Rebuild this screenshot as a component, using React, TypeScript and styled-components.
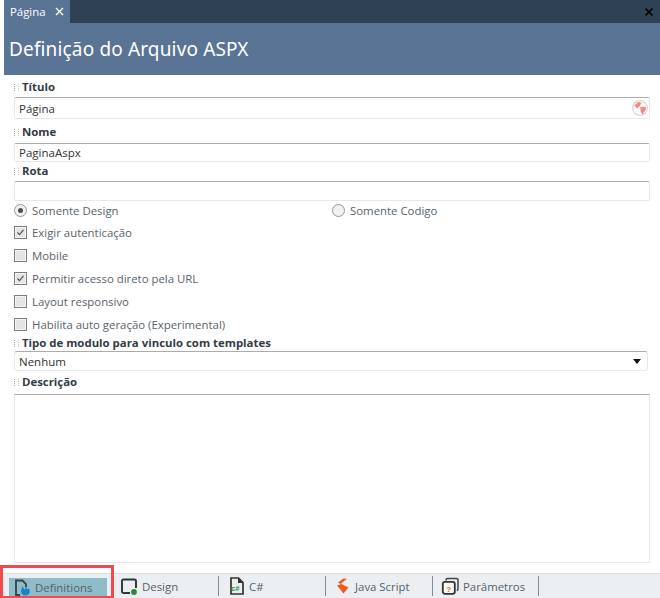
import React from "react";
import styled, { createGlobalStyle } from "styled-components";

const Global = createGlobalStyle`
  html, body { margin: 0; padding: 0; background: #fff; }
  body { font-family: "Open Sans", "Noto Sans", sans-serif; }
  #root { width: 660px; height: 598px; overflow: hidden; }
`;

const Page = styled.div`
  width: 660px;
  height: 598px;
  display: flex;
  flex-direction: column;
  background: #fff;
  overflow: hidden;
`;

const TabStrip = styled.div`
  height: 23px;
  flex: none;
  margin-left: 4px;
  display: flex;
  justify-content: space-between;
  align-items: center;
  background: #2e4155;
`;

const DocTab = styled.div`
  width: 66px;
  height: 23px;
  display: flex;
  align-items: center;
  gap: 9px;
  padding-left: 6px;
  box-sizing: border-box;
  background: #5a7495;
  color: #fff;
  font-size: 11.4px;
`;

const CloseGlyph = styled.svg`
  display: block;
  flex: none;
`;

const StripClose = styled(CloseGlyph)`
  margin-right: 7px;
`;

const Banner = styled.div`
  height: 52px;
  flex: none;
  margin-left: 4px;
  padding-left: 5px;
  display: flex;
  align-items: center;
  background: #5a7495;
  color: #fff;
  font-family: "Noto Sans", sans-serif;
  font-size: 19px;
  letter-spacing: 0.15px;
`;

const Form = styled.div`
  flex: 1;
  display: flex;
  flex-direction: column;
  padding: 0 10px 0 14px;
  min-height: 0;
`;

const Label = styled.div<{ $top: number; $height?: number }>`
  margin-top: ${(p) => p.$top}px;
  height: ${(p) => p.$height ?? 16}px;
  display: flex;
  align-items: center;
  gap: 3px;
  color: #333c46;
  font-size: 11.4px;
  font-weight: 700;
  line-height: 16px;
  white-space: nowrap;
`;

const Grip = styled.span`
  width: 5px;
  height: 7px;
  flex: none;
  border-left: 1px dotted #a8a8a8;
  border-right: 1px dotted #c8c8c8;
  box-sizing: border-box;
`;

const Input = styled.div<{ $height: number; $top: number }>`
  margin-top: ${(p) => p.$top}px;
  height: ${(p) => p.$height}px;
  flex: none;
  box-sizing: border-box;
  display: flex;
  align-items: center;
  justify-content: space-between;
  padding: 0 0 0 4px;
  border: 1px solid #e3e9ef;
  border-top-color: #acacac;
  border-radius: 2px;
  background: #fff;
  color: #333;
  font-size: 11.5px;
`;

const SelectBox = styled(Input)`
  margin-right: 2px;
  padding-right: 6px;
  border-radius: 3px;
`;

const Arrow = styled.span`
  width: 0;
  height: 0;
  border-left: 4px solid transparent;
  border-right: 4px solid transparent;
  border-top: 5px solid #111;
`;

const RadioRow = styled.div`
  height: 18px;
  flex: none;
  display: grid;
  grid-template-columns: 318px 1fr;
  align-items: center;
`;

const Option = styled.div`
  display: flex;
  align-items: center;
  gap: 5px;
  color: #59626b;
  font-size: 11.4px;
  white-space: nowrap;
`;

const CheckRow = styled(Option)<{ $top: number }>`
  margin-top: ${(p) => p.$top}px;
  height: 18px;
  flex: none;
`;

const RadioMark = styled.span<{ $on?: boolean }>`
  width: 13px;
  height: 13px;
  box-sizing: border-box;
  border: 1px solid #969696;
  border-radius: 50%;
  background: #f1f1f1;
  display: flex;
  align-items: center;
  justify-content: center;
  &::after {
    content: "";
    width: 5px;
    height: 5px;
    border-radius: 50%;
    background: ${(p) => (p.$on ? "#4d4d4d" : "transparent")};
  }
`;

const CheckMark = styled.span`
  width: 13px;
  height: 13px;
  box-sizing: border-box;
  border: 1px solid #7d7d7d;
  background: #e4e4e4;
  box-shadow: inset 0 0 0 1px #f4f4f4;
  display: flex;
  align-items: center;
  justify-content: center;
`;

const TextArea = styled.div`
  height: 169px;
  margin-top: 4px;
  flex: none;
  box-sizing: border-box;
  border: 1px solid #e3e9ef;
  border-top-color: #acacac;
  background: #fff;
`;

const BottomBar = styled.div`
  position: relative;
  height: 25px;
  flex: none;
  display: flex;
  align-items: stretch;
  background: #eceff1;
  border-top: 1px solid #dcdfe1;
  box-sizing: border-box;
  color: #56606a;
  font-size: 11.4px;
`;

const BarTab = styled.div<{ $width: number; $pad: number; $gap: number; $sep?: boolean }>`
  width: ${(p) => p.$width}px;
  box-sizing: border-box;
  display: flex;
  align-items: center;
  gap: ${(p) => p.$gap}px;
  white-space: nowrap;
  padding-left: ${(p) => p.$pad}px;
  border-right: ${(p) => (p.$sep ? "1px solid #7d8c9c" : "0")};
  margin: 2px 0 2px;
`;

const ActiveTab = styled.div`
  width: 113px;
  flex: none;
  display: flex;
  align-items: center;
  padding-left: 9px;
  box-sizing: border-box;
`;

const ActiveFill = styled.div`
  width: 98px;
  height: 19px;
  margin-top: 3px;
  padding-left: 5px;
  box-sizing: border-box;
  background: #8fbcc9;
  display: flex;
  align-items: center;
  gap: 3px;
`;

const RedFrame = styled.div`
  position: absolute;
  left: 0;
  top: -9px;
  width: 114px;
  height: 34px;
  box-sizing: border-box;
  border: 3px solid #f04a4f;
  pointer-events: none;
`;

const Icon = styled.svg`
  display: block;
  flex: none;
`;

const Close = ({ c, s = 9 }: { c: string; s?: number }) => (
  <CloseGlyph width={s} height={s} viewBox="0 0 9 9">
    <path d="M1 1l7 7M8 1L1 8" stroke={c} strokeWidth="1.4" />
  </CloseGlyph>
);

const Tick = () => (
  <svg width="9" height="9" viewBox="0 0 9 9">
    <path d="M1.5 4.5l2 2.2L7.5 1.8" fill="none" stroke="#555" strokeWidth="1.2" />
  </svg>
);

const Globe = () => (
  <Icon width="18" height="18" viewBox="0 0 18 18">
    <circle cx="9" cy="9" r="7.4" fill="#fff" stroke="#d9d4d4" strokeWidth="1.2" />
    <path d="M3.2 6.5L7.5 2.8l3 1L9 6.8 6.2 9.5z" fill="#f58a82" />
    <path d="M9 8.2l5.6-.7.4 3L11.5 15.5 10 13z" fill="#f58a82" />
  </Icon>
);

const Svg18 = ({ children }: { children: React.ReactNode }) => (
  <Icon width="18" height="18" viewBox="0 0 18 18">
    {children}
  </Icon>
);

export default function App() {
  return (
    <Page>
      <Global />
      <TabStrip>
        <DocTab>
          Página
          <Close c="#fff" />
        </DocTab>
        <StripClose width="8" height="8" viewBox="0 0 8 8">
          <path d="M.5.5l7 7M7.5.5l-7 7" stroke="#000" strokeWidth="1.5" />
        </StripClose>
      </TabStrip>
      <Banner>Definição do Arquivo ASPX</Banner>
      <Form>
        <Label $top={4}>
          <Grip />
          Título
        </Label>
        <Input $height={22} $top={2}>
          Página
          <Globe />
        </Input>
        <Label $top={5}>
          <Grip />
          Nome
        </Label>
        <Input $height={19} $top={3}>
          PaginaAspx
        </Input>
        <Label $top={1}>
          <Grip />
          Rota
        </Label>
        <Input $height={20} $top={2} />
        <RadioRow>
          <Option>
            <RadioMark $on />
            Somente Design
          </Option>
          <Option>
            <RadioMark />
            Somente Codigo
          </Option>
        </RadioRow>
        <CheckRow $top={4}>
          <CheckMark>
            <Tick />
          </CheckMark>
          Exigir autenticação
        </CheckRow>
        <CheckRow $top={5}>
          <CheckMark />
          Mobile
        </CheckRow>
        <CheckRow $top={5}>
          <CheckMark>
            <Tick />
          </CheckMark>
          Permitir acesso direto pela URL
        </CheckRow>
        <CheckRow $top={5}>
          <CheckMark />
          Layout responsivo
        </CheckRow>
        <CheckRow $top={5}>
          <CheckMark />
          Habilita auto geração (Experimental)
        </CheckRow>
        <Label $top={4} $height={12}>
          <Grip />
          Tipo de modulo para vinculo com templates
        </Label>
        <SelectBox $height={20} $top={2}>
          Nenhum
          <Arrow />
        </SelectBox>
        <Label $top={3}>
          <Grip />
          Descrição
        </Label>
        <TextArea />
      </Form>
      <BottomBar>
        <RedFrame />
        <ActiveTab>
          <ActiveFill>
            <Svg18>
              <path d="M6 16H2V1.5h6.5L12 5v3" fill="none" stroke="#3a4248" strokeWidth="1.8" />
              <path d="M8 7c1 2 2.5 2 2.5 4 1-1 1-2 1-3 2 1 1.5 2.5 2.5 2.5.5 0 .5-1 .5-1.5 1.5 2 1.5 3.5 1 5-.7 1.5-2.500 2.500-4 2.500-2.500 0-4.500-1.800-4.500-4 0-2 1.500-3.500 1-5.500z" fill="#1583d0" />
            </Svg18>
            Definitions
          </ActiveFill>
        </ActiveTab>
        <BarTab $width={106} $pad={7} $gap={4} $sep>
          <Svg18>
            <path d="M10 16H3.500A1.500 1.500 0 0 1 2 14.500V4a1.500 1.500 0 0 1 1.500-1.500h11A1.500 1.500 0 0 1 16 4v7" fill="none" stroke="#333" strokeWidth="1.9" />
            <circle cx="14" cy="15" r="2.900" fill="#27883c" />
          </Svg18>
          Design
        </BarTab>
        <BarTab $width={107} $pad={9} $gap={3} $sep>
          <Svg18>
            <path d="M3 17V1h7.500L15 5.500V17z" fill="none" stroke="#333" strokeWidth="1.700" />
            <path d="M10 1v5h5z" fill="#333" />
            <text x="3" y="14" fontSize="7.500" fontWeight="700" fill="#1f8a3c" fontFamily="Liberation Sans">c#</text>
          </Svg18>
          C#
        </BarTab>
        <BarTab $width={107} $pad={8} $gap={3} $sep>
          <Svg18>
            <path d="M9.500 1.500L13 1.800 6.500 7 4 5.500z" fill="#f05a1a" />
            <path d="M3 8.500L7.500 7l7 3.500-5 6z" fill="#f05a1a" />
          </Svg18>
          Java Script
        </BarTab>
        <BarTab $width={106} $pad={8} $gap={4} $sep>
          <Svg18>
            <path d="M5 3.500V2.800C5 2 5.500 1.500 6.500 1.500h9c1 0 1.500.5 1.500 1.500v9c0 1-.5 1.500-1.200 1.500" fill="none" stroke="#444" strokeWidth="1.500" />
            <rect x="1.800" y="4.800" width="12" height="12" rx="2" fill="#f6f6f6" stroke="#333" strokeWidth="1.800" />
            <text x="5.200" y="14.500" fontSize="8" fontWeight="700" fill="#c77a1a" fontFamily="Liberation Sans">?</text>
          </Svg18>
          Parâmetros
        </BarTab>
      </BottomBar>
    </Page>
  );
}
